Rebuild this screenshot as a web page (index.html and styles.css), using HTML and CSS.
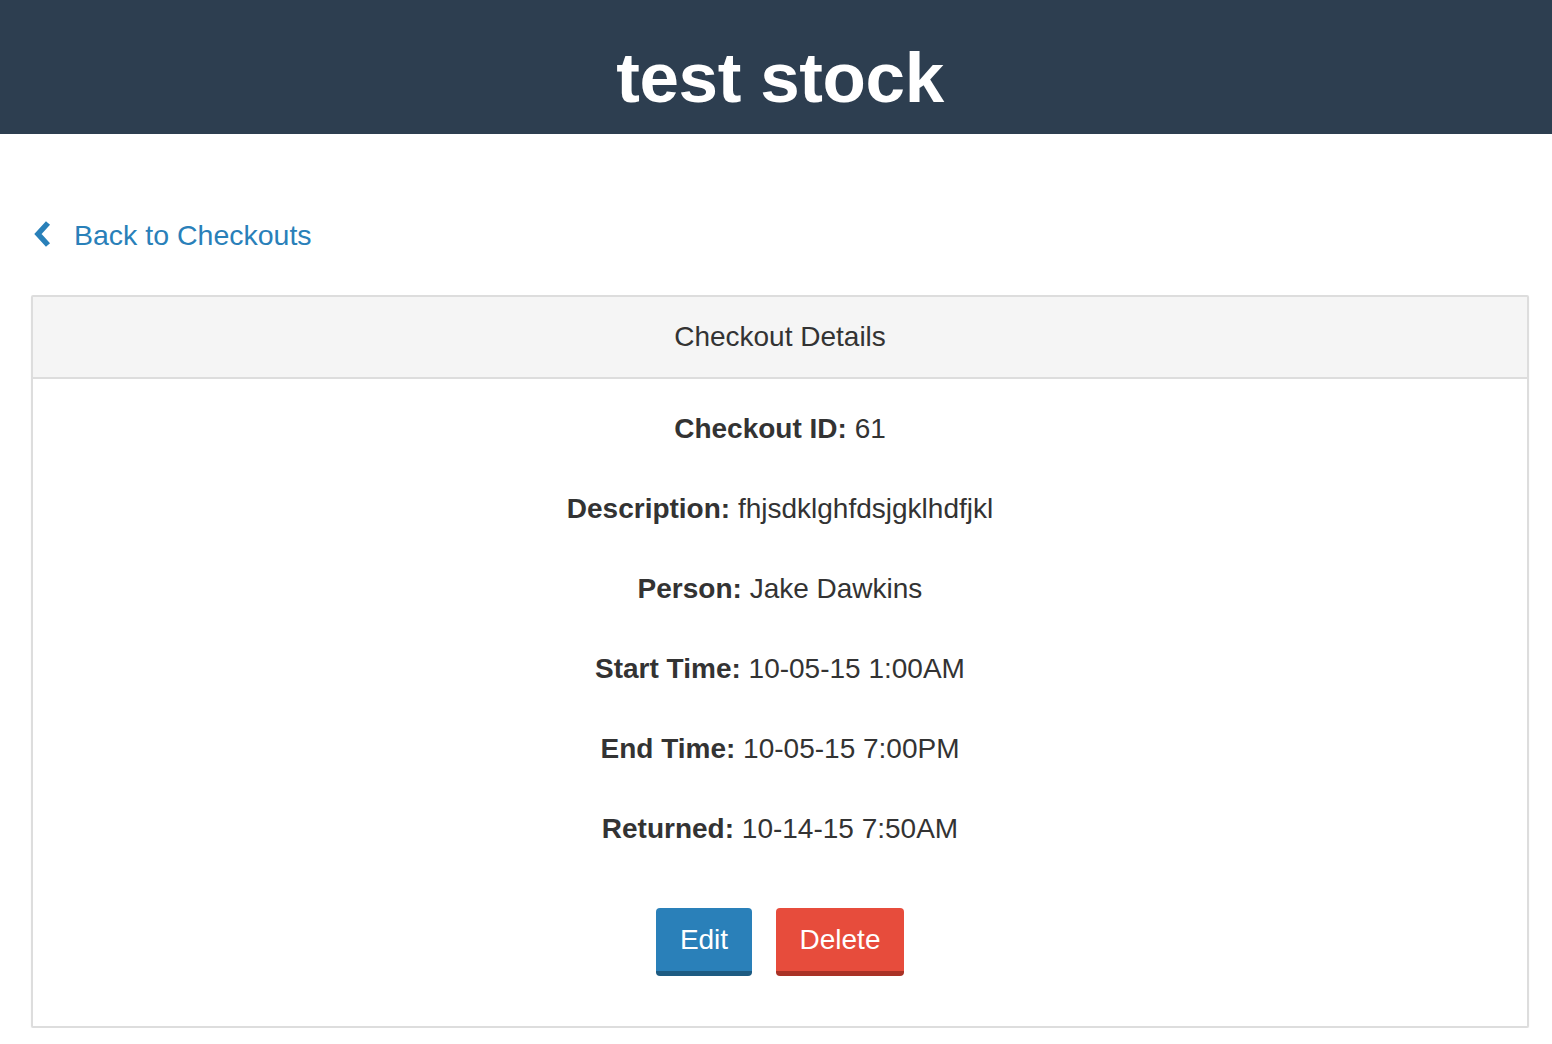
FILE: index.html
```html
<!DOCTYPE html>
<html lang="en">
<head>
<meta charset="utf-8">
<title>test stock</title>
<link rel="stylesheet" href="styles.css">
</head>
<body>
<header class="topbar">
  <h1 class="brand">test stock</h1>
</header>
<main class="container">
  <a class="back-link" href="#">
    <svg class="chev" viewBox="0 0 20 28" width="20" height="28" aria-hidden="true">
      <path d="M15 3 L5 14 L15 25" fill="none" stroke="#2980b9" stroke-width="5.5" stroke-linejoin="miter" stroke-linecap="butt"/>
    </svg>
    <span>Back to Checkouts</span>
  </a>
  <section class="panel">
    <div class="panel-heading">Checkout Details</div>
    <div class="panel-body">
      <p><strong>Checkout ID:</strong> 61</p>
      <p><strong>Description:</strong> fhjsdklghfdsjgklhdfjkl</p>
      <p><strong>Person:</strong> Jake Dawkins</p>
      <p><strong>Start Time:</strong> 10-05-15 1:00AM</p>
      <p><strong>End Time:</strong> 10-05-15 7:00PM</p>
      <p><strong>Returned:</strong> 10-14-15 7:50AM</p>
      <div class="actions">
        <a class="btn btn-edit" href="#">Edit</a>
        <a class="btn btn-delete" href="#">Delete</a>
      </div>
    </div>
  </section>
</main>
</body>
</html>
```

FILE: styles.css
```css
* { box-sizing: border-box; }
html, body {
  margin: 0;
  padding: 0;
  background: #ffffff;
  font-family: "Liberation Sans", Arial, sans-serif;
  color: #333333;
}
.topbar {
  height: 134px;
  background: #2d3e50;
  text-align: center;
  padding-left: 8px;
}
.brand {
  margin: 0;
  padding-top: 22px;
  font-size: 71px;
  line-height: 112px;
  font-weight: bold;
  color: #ffffff;
  letter-spacing: -0.4px;
}
.container {
  width: 1498px;
  margin-left: 31px;
}
.back-link {
  display: flex;
  align-items: center;
  gap: 21px;
  margin-top: 86px;
  height: 28px;
  color: #2980b9;
  text-decoration: none;
  font-size: 28.5px;
  width: max-content;
}
.back-link span { line-height: 28px; position: relative; top: 1px; }
.chev { display: block; margin-left: 2px; }
.panel {
  margin-top: 47px;
  border: 2px solid #dddddd;
  border-radius: 2px;
  box-shadow: 0 1px 2px rgba(0,0,0,0.05);
  background: #fff;
}
.panel-heading {
  background: #f5f5f5;
  border-bottom: 2px solid #dddddd;
  height: 82px;
  text-align: center;
  font-size: 28px;
  line-height: 80px;
  color: #333;
}
.panel-body {
  padding: 30px 30px 50px;
  text-align: center;
  font-size: 28px;
}
.panel-body p {
  margin: 0 0 40px;
  line-height: 40px;
}
.panel-body strong { font-weight: bold; }
.actions {
  display: flex;
  justify-content: center;
  gap: 24px;
  margin-top: 59px;
}
.btn {
  display: block;
  height: 68px;
  line-height: 64px;
  font-size: 28px;
  color: #ffffff;
  text-decoration: none;
  border-radius: 4px;
  text-align: center;
}
.btn-edit {
  background: #2a80b9;
  border-bottom: 5px solid #1d5b82;
  width: 96px;
}
.btn-delete {
  background: #e74c3c;
  border-bottom: 5px solid #a93226;
  width: 128px;
}
```
